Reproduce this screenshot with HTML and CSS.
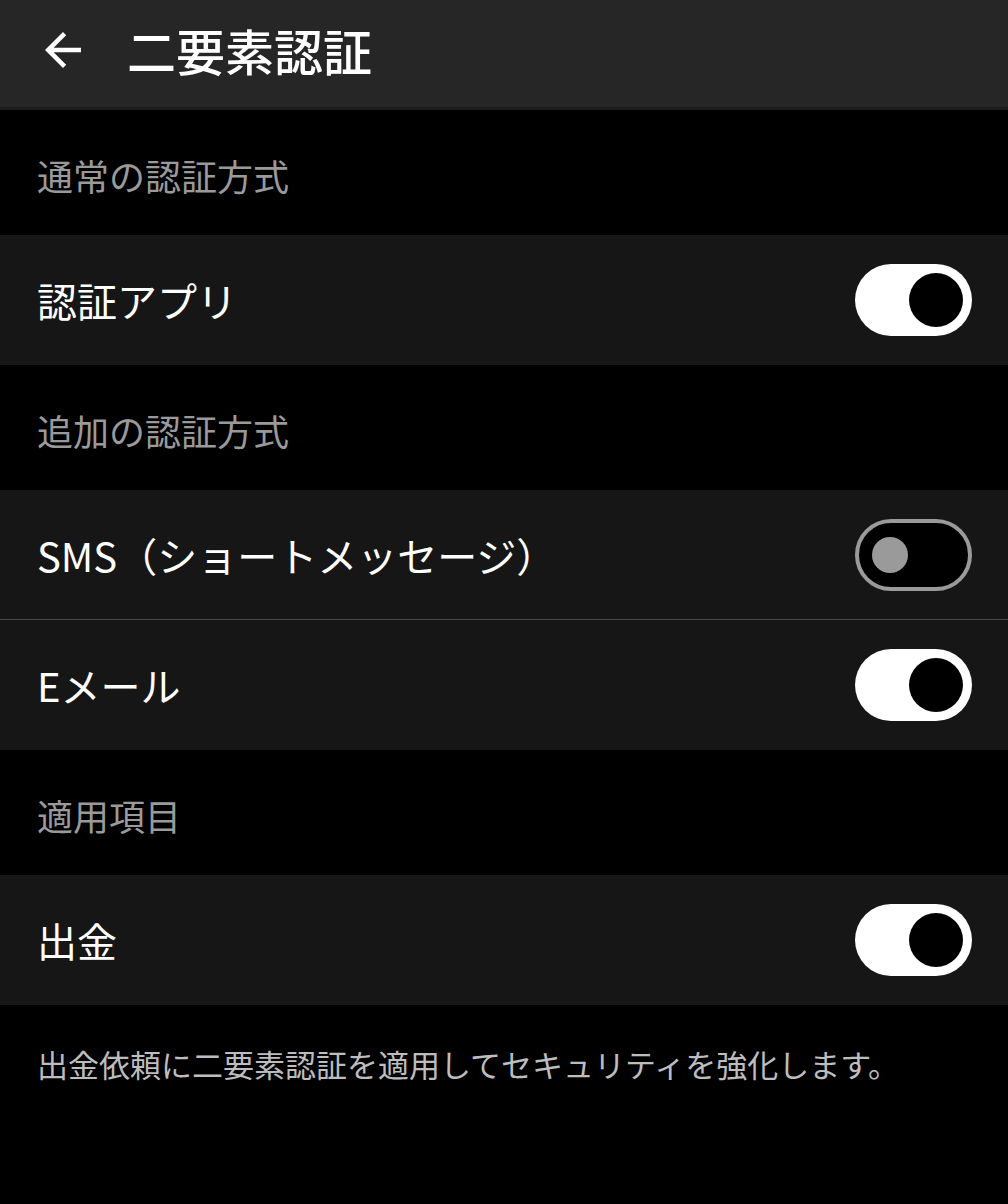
FILE: index.html
```html
<!DOCTYPE html>
<html lang="ja">
<head>
    <meta charset="UTF-8">
    <meta name="viewport" content="width=device-width, initial-scale=1.0">
    <title>二要素認証</title>
    <link rel="stylesheet" href="styles.css">
</head>
<body>
    <header class="app-bar">
        <button class="back-btn" aria-label="戻る">
            <svg viewBox="0 0 24 24" width="54" height="54">
                <path fill="#fff" d="M20 11H7.83l5.59-5.59L12 4l-8 8 8 8 1.41-1.41L7.83 13H20v-2z"/>
            </svg>
        </button>
        <h1>二要素認証</h1>
    </header>

    <div class="section-title">通常の認証方式</div>
    <div class="row">
        <span class="label">認証アプリ</span>
        <span class="toggle on"><span class="knob"></span></span>
    </div>

    <div class="section-title">追加の認証方式</div>
    <div class="row divided">
        <span class="label">SMS（ショートメッセージ）</span>
        <span class="toggle off"><span class="knob"></span></span>
    </div>
    <div class="row">
        <span class="label">Eメール</span>
        <span class="toggle on"><span class="knob"></span></span>
    </div>

    <div class="section-title">適用項目</div>
    <div class="row">
        <span class="label">出金</span>
        <span class="toggle on"><span class="knob"></span></span>
    </div>

    <p class="note">出金依頼に二要素認証を適用してセキュリティを強化します。</p>
</body>
</html>
```

FILE: styles.css
```css
* {
    margin: 0;
    padding: 0;
    box-sizing: border-box;
}

body {
    font-family: "Noto Sans CJK JP", "Noto Sans", sans-serif;
    background-color: #000;
    color: #fff;
    min-height: 100vh;
}

.app-bar {
    height: 110px;
    background: #262626;
    border-bottom: 3px solid #1d1d1d;
    display: flex;
    align-items: center;
    padding-left: 36px;
    padding-bottom: 8px;
}

.back-btn {
    background: none;
    border: none;
    width: 54px;
    height: 54px;
    display: flex;
}

.app-bar h1 {
    font-size: 49px;
    font-weight: 500;
    margin-left: 37px;
}

.section-title {
    height: 125px;
    display: flex;
    align-items: center;
    padding-left: 37px;
    padding-top: 4px;
    font-size: 36px;
    color: #9a9a9a;
}

.row {
    height: 130px;
    background: #161616;
    display: flex;
    align-items: center;
    justify-content: space-between;
    padding: 0 36px 0 37px;
}

.row.divided {
    border-bottom: 1px solid #4a4a4a;
}

.label {
    font-size: 40px;
}

.toggle {
    width: 117px;
    height: 72px;
    border-radius: 36px;
    display: flex;
    align-items: center;
}

.toggle.on {
    background: #fff;
    justify-content: flex-end;
    padding-right: 9px;
}

.toggle.on .knob {
    width: 54px;
    height: 54px;
    border-radius: 50%;
    background: #000;
}

.toggle.off {
    background: #000;
    border: 4px solid #9a9a9a;
    padding-left: 13px;
}

.toggle.off .knob {
    width: 36px;
    height: 36px;
    border-radius: 50%;
    background: #9a9a9a;
}

.note {
    padding: 36px 37px;
    font-size: 31px;
    color: #bdbdbd;
}
```
